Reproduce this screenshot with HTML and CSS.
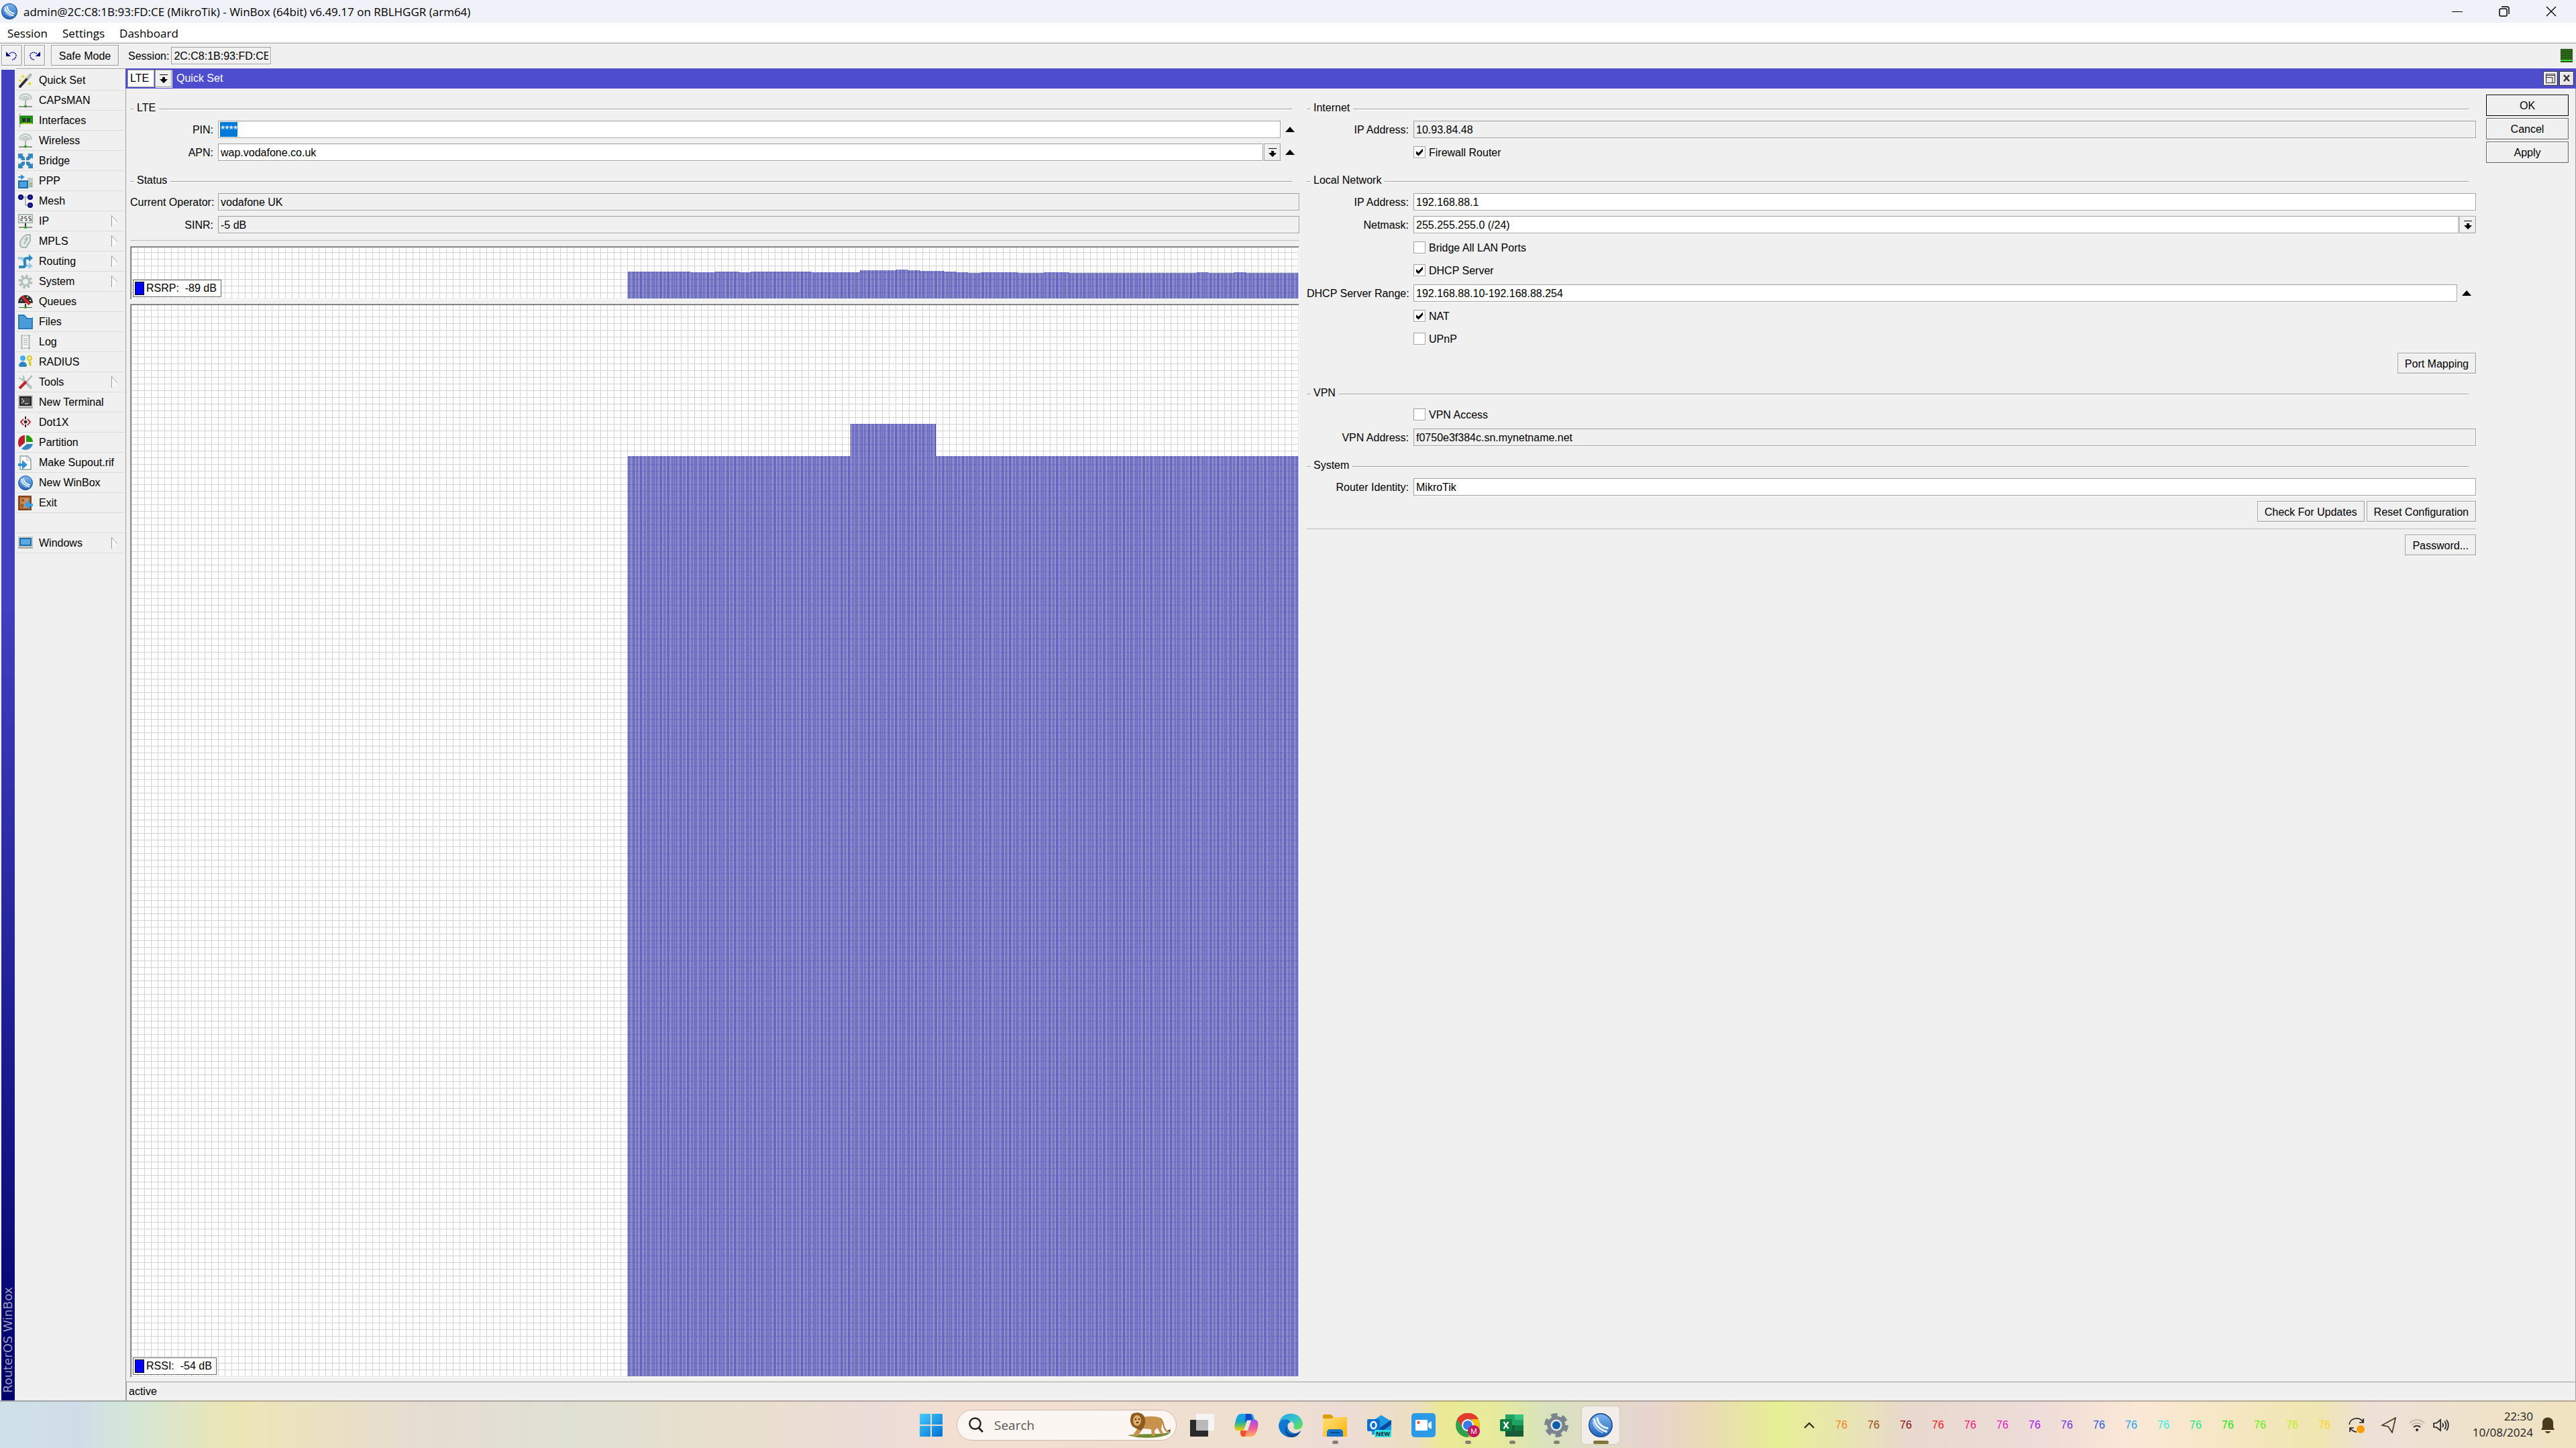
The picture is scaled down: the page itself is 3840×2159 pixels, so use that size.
FILE: index.html
```html
<!DOCTYPE html>
<html lang="en">
<head>
<meta charset="utf-8">
<title>admin@2C:C8:1B:93:FD:CE (MikroTik) - WinBox</title>
<link rel="stylesheet" href="styles.css">
</head>
<body>
<svg class="defs" aria-hidden="true">
  <defs>
    <linearGradient id="ball" x1="0" y1="0" x2="0" y2="1"><stop offset="0" stop-color="#7db8f5"/><stop offset="1" stop-color="#2263b5"/></linearGradient>
    <linearGradient id="blue" x1="0" y1="0" x2="1" y2="1"><stop offset="0" stop-color="#44ccff"/><stop offset="1" stop-color="#0070d0"/></linearGradient>
    <linearGradient id="edgeTop" x1="0" y1="0" x2="1" y2="1"><stop offset="0" stop-color="#22a6e8"/><stop offset=".5" stop-color="#35c4cc"/><stop offset="1" stop-color="#6fe63c"/></linearGradient>
    <linearGradient id="folder" x1="0" y1="0" x2="1" y2="1"><stop offset="0" stop-color="#ffe07a"/><stop offset="1" stop-color="#fbb40c"/></linearGradient>
    <linearGradient id="copA" x1="0" y1="0" x2="0" y2="1"><stop offset="0" stop-color="#18a0ee"/><stop offset=".45" stop-color="#1aa6c8"/><stop offset=".7" stop-color="#67bf5a"/><stop offset="1" stop-color="#ffcb0a"/></linearGradient>
    <linearGradient id="copB" x1="0" y1="0" x2="0" y2="1"><stop offset="0" stop-color="#a04cf0"/><stop offset=".5" stop-color="#ee5a9a"/><stop offset="1" stop-color="#ffb35c"/></linearGradient>
    <symbol id="i-ball" viewBox="0 0 22 22"><circle cx="11" cy="11" r="10.5" fill="url(#ball)" stroke="#1c4f93"/><path d="M5 5c1 6 5 10 12 12M8 4c0 5 4 9 10 10" fill="none" stroke="#e6f2ff" stroke-width="2"/><path d="M4 8c1 5 4 8 9 10" fill="none" stroke="#bcdcff"/></symbol>
    <symbol id="i-antenna" viewBox="0 0 22 22"><path d="M2 9a9 8 0 0 1 18 0M5 10a6 5 0 0 1 12 0M8 11a3 3 0 0 1 6 0" fill="none" stroke="#b4c1bf" stroke-width="2"/><path d="M11 10v9" stroke="#a6b3b0" stroke-width="2"/><path d="M1 20h20" stroke="#333"/><circle cx="11" cy="19.500" r="2" fill="#22a810"/></symbol>
    <symbol id="i-down" viewBox="0 0 12 13"><path d="M0 0h12v1H0zM4 4h4v3h4l-6 6-6-6h4z"/></symbol>
    <symbol id="i-up" viewBox="0 0 14 8"><path d="M7 0l7 8H0z"/></symbol>
    <symbol id="i-sub" viewBox="0 0 10 18"><path d="M1 1l8 9-8 7z" fill="#fbfbfb"/><path d="M0 0h1v17H0z" fill="#999"/><path d="M1 1l8 9" stroke="#aaa" fill="none"/></symbol>
  </defs>
</svg>

<header class="titlebar">
  <svg class="logo"><use href="#i-ball"/></svg>
  <h1 class="title">admin@2C:C8:1B:93:FD:CE (MikroTik) - WinBox (64bit) v6.49.17 on RBLHGGR (arm64)</h1>
  <div class="wincontrols">
    <button aria-label="Minimize"><svg viewBox="0 0 16 16"><path d="M0 8.500h16" stroke="#000"/></svg></button>
    <button aria-label="Restore"><svg viewBox="0 0 16 16" fill="none" stroke="#000" stroke-width="1.500"><rect x="1" y="4" width="11" height="11" rx="2"/><path d="M4 1h8a3 3 0 0 1 3 3v8"/></svg></button>
    <button aria-label="Close"><svg viewBox="0 0 16 16"><path d="M1 1l14 14M15 1L1 15" stroke="#000" stroke-width="1.400"/></svg></button>
  </div>
</header>

<nav class="menubar"><a href="#session">Session</a><a href="#settings">Settings</a><a href="#dashboard">Dashboard</a></nav>

<div class="toolbar">
  <button class="btn tool" aria-label="Undo"><svg viewBox="0 0 17 14"><path d="M5 4c5-4 11-1 10 4-1 3-3 5-6 5" fill="none" stroke="#00008c" stroke-width="1.500" stroke-dasharray="2 1"/><path d="M0 1v7h7z" fill="#00008c"/></svg></button>
  <button class="btn tool" aria-label="Redo"><svg viewBox="0 0 17 14"><path d="M12 4C7 0 1 3 2 8c1 3 3 5 6 5" fill="none" stroke="#00008c" stroke-width="1.500" stroke-dasharray="2 1"/><path d="M17 1v7h-7z" fill="#00008c"/></svg></button>
  <button class="btn safe">Safe Mode</button>
  <label class="sess" for="sess">Session:</label>
  <input class="field ro sessfield" id="sess" value="2C:C8:1B:93:FD:CE" readonly>
  <span class="led" role="img" aria-label="CPU load"></span>
</div>

<div class="workspace">
  <div class="brand"><span>RouterOS WinBox</span></div>
  <nav class="sidebar">
    <a href="#"><svg viewBox="0 0 22 22"><path d="M3 20L18 3" stroke="#333" stroke-width="4" stroke-linecap="round"/><path d="M13 8l6-6" stroke="#b9c1c0" stroke-width="4"/><path d="M7 1l1 3 3 1-3 1-1 3-1-3-3-1 3-1zM17 12l1 3 3 1-3 1-1 2-1-2-2-1 2-1zM3 8l1 2 2 1-2 1-1 2-1-2-2-1 2-1z" fill="#e6dc1c"/></svg>Quick Set</a>
    <a href="#"><svg><use href="#i-antenna"/></svg>CAPsMAN</a>
    <a href="#"><svg viewBox="0 0 22 22"><path d="M1 0h3v21H1z" fill="#c3cdca"/><path d="M3 4h19v11H3z" fill="#1b9a0a" stroke="#0e6a04"/><path d="M6 7h5v6H6zM13 7h5v6h-5z" fill="#333"/><path d="M6 15h14" stroke="#e0d022" stroke-width="2" stroke-dasharray="2 1"/></svg>Interfaces</a>
    <a href="#"><svg><use href="#i-antenna"/></svg>Wireless</a>
    <a href="#"><svg viewBox="0 0 22 22"><path d="M0 0h8L6 2l4 4v4H6L2 6 0 8zM22 0h-8l2 2-4 4v4h4l4-4 2 2zM0 22h8l-2-2 4-4v-4H6l-4 4-2-2zM22 22h-8l2-2-4-4v-4h4l4 4 2-2z" fill="#3387bd"/></svg>Bridge</a>
    <a href="#"><svg viewBox="0 0 22 22"><path d="M14 6h8v15h-8z" fill="#c4cac8"/><path d="M17 15h4M17 18h4" stroke="#3aa52a"/><path d="M1 11h13v10H1z" fill="#4aa3df" stroke="#1d6ea5" stroke-width="2"/><path d="M0 4h4V1l6 4-6 4V6H0z" fill="#2d8fd0"/></svg>PPP</a>
    <a href="#"><svg viewBox="0 0 22 22"><path d="M5 5h12M11 5v12h6" stroke="#b0bbb9" stroke-width="2" fill="none"/><g fill="#2632a5" stroke="#00006c" stroke-width="2"><circle cx="4" cy="5" r="3"/><circle cx="18" cy="5" r="3"/><circle cx="18" cy="17" r="3"/></g></svg>Mesh</a>
    <a href="#"><svg viewBox="0 0 22 22"><path d="M1 1h20v12H1z" fill="#fff" stroke="#a9b7b4" stroke-width="2"/><path d="M4 4h3v3H4v3h3M13 4h-3v3h3v3h-3M19 4h-3v3h3v3h-3" fill="none" stroke="#222"/><path d="M11 14v6" stroke="#333" stroke-width="2"/><path d="M1 20h20" stroke="#333"/><circle cx="11" cy="20" r="2" fill="#22a810"/></svg>IP<svg class="sub"><use href="#i-sub"/></svg></a>
    <a href="#"><svg viewBox="0 0 22 22"><path d="M8 4l5-3h5v9l-6 10H6l-3-3V11z" fill="#e3e9e7" stroke="#a9b7b4" stroke-width="2"/><path d="M9 15l5-9M10 8l4-3" stroke="#a9b7b4" stroke-width="2"/></svg>MPLS<svg class="sub"><use href="#i-sub"/></svg></a>
    <a href="#"><svg viewBox="0 0 22 22"><path d="M0 4h7l7 12h2v-4l6 6-6 4v-3h-4L5 8H0z" fill="#9fc8e4"/><path d="M1 21v-4h7V8c0-3 2-4 8-4V0l6 6-6 5V8h-4v9c0 3-2 4-4 4z" fill="#2f88c2"/></svg>Routing<svg class="sub"><use href="#i-sub"/></svg></a>
    <a href="#"><svg viewBox="0 0 22 22"><circle cx="11" cy="11" r="8.500" fill="none" stroke="#b1bfbc" stroke-width="4" stroke-dasharray="3.600 3.070"/><circle cx="11" cy="11" r="5.500" fill="#eef1f0" stroke="#b1bfbc" stroke-width="3"/></svg>System<svg class="sub"><use href="#i-sub"/></svg></a>
    <a href="#"><svg viewBox="0 0 22 22"><path d="M0 13C0-3 22-3 22 13z" fill="#333"/><path d="M6 3l11 12" stroke="#d42828" stroke-width="4"/><path d="M4 9h1M17 9h2M13 4h2" stroke="#ddd" stroke-width="2"/><path d="M11 14v5" stroke="#333" stroke-width="2"/><path d="M1 19.500h20" stroke="#555"/><circle cx="11" cy="19" r="2" fill="#22a810"/></svg>Queues</a>
    <a href="#"><svg viewBox="0 0 22 22"><path d="M0 0h9l4 4h9v18H0z" fill="#2a7cba"/><path d="M2 2h6l5 5h7v13H2z" fill="#4d9cd9"/><path d="M13 4h8v1h-7z" fill="#fff"/></svg>Files</a>
    <a href="#"><svg viewBox="0 0 22 22"><path d="M5 1h13v20H5z" fill="#fafafa"/><path d="M5.500 0v22M16.500 0v22" stroke="#a9b7b4" stroke-width="2"/><path d="M5 1.500h13M5 20h13" stroke="#a9b7b4" stroke-width="2" stroke-dasharray="2 1"/><path d="M8 6h6M8 9h6M8 12h6M8 15h6" stroke="#94a3a0"/></svg>Log</a>
    <a href="#"><svg viewBox="0 0 22 22"><circle cx="7" cy="5" r="4" fill="#42b0ee"/><path d="M1 17c0-9 12-9 12 0l-2 1H3z" fill="#2b85c0"/><circle cx="17" cy="5" r="3" fill="none" stroke="#d8cb12" stroke-width="2"/><path d="M17 8v8M18 12h2M18 15h2" stroke="#d8cb12" stroke-width="2"/></svg>RADIUS</a>
    <a href="#"><svg viewBox="0 0 22 22"><path d="M7 7l13 13" stroke="#b3c0bd" stroke-width="4"/><path d="M1 4c2 3 6 3 8 1L7 1" stroke="#b3c0bd" stroke-width="2" fill="none"/><path d="M12 11L21 1" stroke="#a9b7b4" stroke-width="2"/><path d="M2 20l10-10" stroke="#c3202f" stroke-width="4"/></svg>Tools<svg class="sub"><use href="#i-sub"/></svg></a>
    <a href="#"><svg viewBox="0 0 22 22"><path d="M0 0h22v20H0z" fill="#c6c6c6"/><path d="M0 18h22v2H0z" fill="#aaa"/><path d="M2 2h18v14H2z" fill="#222"/><path d="M4 4h14v10H4z" fill="#4a4a4a"/><path d="M5 5l4 4-4 3M10 13h5" stroke="#fff" fill="none"/></svg>New Terminal</a>
    <a href="#"><svg viewBox="0 0 22 22"><path d="M8 6L4 10l4 5M14 6l4 4-4 5" fill="none" stroke="#c4273a" stroke-width="2"/><path d="M11 2v4M11 14v4" stroke="#222" stroke-width="2"/><circle cx="11" cy="10" r="2.500" fill="#333"/></svg>Dot1X</a>
    <a href="#"><svg viewBox="0 0 22 22"><path d="M10 0v11L2 18C-3 9 2 0 10 0z" fill="#bb1f2c"/><path d="M12 0c6 0 10 5 10 10H12z" fill="#1e9a0c"/><path d="M5 20l8-7h9c-2 8-11 11-17 7z" fill="#3484c4"/></svg>Partition</a>
    <a href="#"><svg viewBox="0 0 22 22"><path d="M3 1h11l5 5v15H3z" fill="#fafafa" stroke="#a9b7b4" stroke-width="2"/><path d="M13 1v6h6" fill="none" stroke="#a9b7b4"/><path d="M0 12h6V7l8 7-8 7v-5H0z" fill="#2b93d8"/></svg>Make Supout.rif</a>
    <a href="#"><svg><use href="#i-ball"/></svg>New WinBox</a>
    <a href="#"><svg viewBox="0 0 22 22"><path d="M0 0h20v22H0z" fill="#8a481c"/><path d="M3 3h14v16H3z" fill="#c98d5e"/><path d="M5 5h4v4H5zM4 12h4v6H4z" fill="#9a5a2b"/><path d="M22 12h-5V6l-8 8 8 7v-5h5z" fill="#36a4ea"/></svg>Exit</a>
    <span class="blank"></span>
    <a href="#"><svg viewBox="0 0 22 22"><path d="M0 1h22v18H0z" fill="#c6c6c6"/><path d="M0 17h22v2H0z" fill="#aaa"/><path d="M3 4h16v10H3z" fill="#5aa9e2" stroke="#1c70aa" stroke-width="2"/></svg>Windows<svg class="sub"><use href="#i-sub"/></svg></a>
  </nav>

  <main class="window">
    <div class="wintitle">
      <select class="mode" aria-label="Mode"><option>LTE</option></select>
      <button class="btn drop" aria-label="Open mode list"><svg><use href="#i-down"/></svg></button>
      <h2>Quick Set</h2>
      <button class="wbtn" aria-label="Restore window"><svg viewBox="0 0 14 14" fill="none" stroke="#333"><path d="M.5.500h13v13H.5zM1 2.500h13M1 5.500h9v8" /></svg></button>
      <button class="wbtn" aria-label="Close window"><svg viewBox="0 0 14 14"><path d="M3 2l8 9M11 2L3 11" stroke="#333" stroke-width="2.500"/></svg></button>
    </div>

    <form class="panel">
      <section class="col left">
        <h3 class="legend">LTE</h3>
        <div class="row"><label for="pin">PIN:</label><input class="field pin" id="pin" value="****"><button type="button" class="fold" aria-label="Remove PIN"><svg><use href="#i-up"/></svg></button></div>
        <div class="row"><label for="apn">APN:</label><input class="field" id="apn" value="wap.vodafone.co.uk"><button type="button" class="btn drop" aria-label="APN list"><svg><use href="#i-down"/></svg></button><button type="button" class="fold" aria-label="Remove APN"><svg><use href="#i-up"/></svg></button></div>
        <h3 class="legend">Status</h3>
        <div class="row"><label for="op">Current Operator:</label><input class="field ro" id="op" value="vodafone UK" readonly></div>
        <div class="row"><label for="sinr">SINR:</label><input class="field ro" id="sinr" value="-5 dB" readonly></div>
        <hr>
        <div class="charts">
          <div class="chart rsrp">
            <i style="width:94px;height:40px"></i><i style="width:36px;height:39px"></i><i style="width:36px;height:40px"></i><i style="width:18px;height:39px"></i><i style="width:90px;height:40px"></i><i style="width:72px;height:39px"></i><i style="width:54px;height:42px"></i><i style="width:18px;height:43px"></i><i style="width:18px;height:42px"></i><i style="width:36px;height:41px"></i><i style="width:18px;height:40px"></i><i style="width:18px;height:39px"></i><i style="width:18px;height:38px"></i><i style="width:56px;height:39px"></i><i style="width:38px;height:38px"></i><i style="width:38px;height:39px"></i><i style="width:190px;height:38px"></i><i style="width:18px;height:39px"></i><i style="width:38px;height:38px"></i><i style="width:18px;height:39px"></i><i style="width:77px;height:38px"></i>
            <p class="key"><b></b>RSRP:&nbsp; -89 dB</p>
          </div>
          <div class="chart rssi">
            <i style="width:332px;height:1372px"></i><i style="width:128px;height:1420px"></i><i style="width:539px;height:1372px"></i>
            <p class="key"><b></b>RSSI:&nbsp; -54 dB</p>
          </div>
        </div>
      </section>

      <section class="col right">
        <h3 class="legend">Internet</h3>
        <div class="row"><label for="wan">IP Address:</label><input class="field ro" id="wan" value="10.93.84.48" readonly></div>
        <div class="row check"><input type="checkbox" id="fw" checked><label for="fw">Firewall Router</label></div>
        <h3 class="legend">Local Network</h3>
        <div class="row"><label for="lan">IP Address:</label><input class="field" id="lan" value="192.168.88.1"></div>
        <div class="row"><label for="mask">Netmask:</label><select class="field" id="mask"><option>255.255.255.0 (/24)</option></select><button type="button" class="btn drop" aria-label="Netmask list"><svg><use href="#i-down"/></svg></button></div>
        <div class="row check"><input type="checkbox" id="br"><label for="br">Bridge All LAN Ports</label></div>
        <div class="row check"><input type="checkbox" id="dhcp" checked><label for="dhcp">DHCP Server</label></div>
        <div class="row"><label for="range">DHCP Server Range:</label><input class="field" id="range" value="192.168.88.10-192.168.88.254"><button type="button" class="fold" aria-label="Remove range"><svg><use href="#i-up"/></svg></button></div>
        <div class="row check"><input type="checkbox" id="nat" checked><label for="nat">NAT</label></div>
        <div class="row check"><input type="checkbox" id="upnp"><label for="upnp">UPnP</label></div>
        <div class="actions"><button type="button" class="btn">Port Mapping</button></div>
        <h3 class="legend">VPN</h3>
        <div class="row check"><input type="checkbox" id="vpn"><label for="vpn">VPN Access</label></div>
        <div class="row"><label for="vpna">VPN Address:</label><input class="field ro" id="vpna" value="f0750e3f384c.sn.mynetname.net" readonly></div>
        <h3 class="legend">System</h3>
        <div class="row"><label for="ident">Router Identity:</label><input class="field" id="ident" value="MikroTik"></div>
        <div class="actions"><button type="button" class="btn">Check For Updates</button><button type="button" class="btn">Reset Configuration</button></div>
        <hr>
        <div class="actions"><button type="button" class="btn">Password...</button></div>
      </section>

      <div class="side">
        <button type="button" class="btn primary">OK</button>
        <button type="button" class="btn">Cancel</button>
        <button type="button" class="btn">Apply</button>
      </div>
    </form>
    <footer class="status">active</footer>
  </main>
</div>

<div class="taskbar">
  <div class="apps">
    <button class="app" aria-label="Start"><svg viewBox="0 0 36 36"><path d="M2 1h15v16H1V2zM19 1h15l1 1v15H19zM1 19h16v16H2l-1-1zM19 19h16v15l-1 1H19z" fill="url(#blue)"/></svg></button>
    <div class="search">
      <svg class="mag" viewBox="0 0 24 24"><circle cx="11" cy="10" r="8.500" fill="none" stroke="#222" stroke-width="2.500"/><path d="M17 17l6 6" stroke="#222" stroke-width="3"/></svg>
      <input type="search" placeholder="Search" aria-label="Search">
      <svg class="lion" viewBox="0 0 64 38"><path d="M0 34c12-3 50 0 64-5-5 8-30 10-50 8z" fill="#6f8a2f"/><path d="M20 8c8-3 22-3 28 0 6 5 3 10 2 17l4 8h-4l-6-10-4 4 1 8h-5l-1-10-12-1-8 11H7l9-13z" fill="#c9924c"/><path d="M48 9c7 2 3 16 12 20" fill="none" stroke="#b9803d" stroke-width="2"/><path d="M59 27l5-2-1 5z" fill="#6d4319"/><path d="M6 3c4-4 16-4 19 4 3 8 0 16-6 20L9 22C3 18 3 8 6 3z" fill="#8d5a20"/><ellipse cx="14" cy="12" rx="6" ry="8" fill="#dcae67"/><path d="M11 10h2M16 10h2M13 15h3" stroke="#3b2208" stroke-width="2"/></svg>
    </div>
    <button class="app" aria-label="Task view"><svg viewBox="0 0 36 36"><rect y="10" width="27" height="25" rx="1" fill="#2a2a2a"/><rect x="9" y="1" width="27" height="25" rx="1" fill="#f5f5f5"/><path d="M9 10h18v16H9z" fill="#b9b9b9"/></svg></button>
    <button class="app" aria-label="Copilot"><svg viewBox="0 0 36 36"><path d="M19 1h6c4 0 4 8 6 9h-7l-4 4-6 12H4c-5-1-4-8-2-15S6 1 11 1z" fill="url(#copA)"/><path d="M17 1h5c4 0 4 5 5 9h-6c-3 0-4 2-5 5z" fill="#1746c8"/><path d="M18 35h-6c-3-1-3-6-3-9h6c4 0 5-3 6-8l3-8h7c6 1 5 9 3 15s-4 10-9 10z" fill="url(#copB)"/><path d="M9 26h6c2 0 3-1 4-3l-3 12h-4c-3-1-3-6-3-9z" fill="#f4502c"/><path d="M19 11h6l-5 15h-6z" fill="#f0e2d4"/></svg></button>
    <button class="app" aria-label="Edge"><svg viewBox="0 0 36 36"><path d="M1 14C4-4 34-4 36 16c0 7-6 9-11 8-4-1-2-3-2-6-1-8-14-11-22-4z" fill="url(#edgeTop)"/><path d="M0 18C1 9 14 6 19 14c-6-2-9 10 1 15 5 2 9 1 13-3-5 11-16 12-23 8C4 31 0 25 0 18z" fill="#0f78d0"/><path d="M12 19c-3 13 12 17 21 7-4 11-14 11-18 9-6-3-7-11-3-16z" fill="#124a93"/></svg></button>
    <button class="app running" aria-label="File Explorer"><svg viewBox="0 0 36 36"><path d="M0 3l2-1h10l4 4h18v8H0z" fill="#dd9c0b"/><path d="M0 8h13l3-2h20v29H0z" fill="url(#folder)"/><path d="M6 35V27l3-3h18l3 3v8z" fill="#1773c4"/><path d="M11 29h14" stroke="#0c4b87" stroke-width="2"/></svg></button>
    <button class="app" aria-label="Outlook"><svg viewBox="0 0 36 36"><path d="M7 12L21 3l15 9v20H7z" fill="#1a9be2"/><path d="M16 24L36 10v7L22 27z" fill="#0a47a0"/><rect y="9" width="19" height="18" rx="2" fill="#0f6fcf"/><ellipse cx="9.500" cy="18" rx="4" ry="5" fill="none" stroke="#fff" stroke-width="2.500"/><rect x="11" y="25" width="25" height="11" rx="2" fill="#2de3dc"/><text x="13" y="34" font-size="9" font-weight="700" font-family="Open Sans, sans-serif" fill="#123">NEW</text></svg></button>
    <button class="app" aria-label="Video call"><svg viewBox="0 0 36 36"><rect width="36" height="36" rx="5" fill="#2d9ae8"/><rect x="6" y="10" width="18" height="16" rx="1" fill="#fff"/><path d="M25 15l5-3v12l-5-3z" fill="#e9f4fd"/><circle cx="10.500" cy="14" r="2.200" fill="#f5523c"/></svg></button>
    <button class="app running" aria-label="Chrome"><svg viewBox="0 0 36 36"><circle cx="18" cy="18" r="18" fill="#30a04e"/><path d="M2 9C10-4 28-3 34 9H18l-8 12z" fill="#e33b2e"/><path d="M34 9c6 13-4 27-16 27l8-13c2-5 0-10-3-14z" fill="#fbc116"/><circle cx="18" cy="18" r="9" fill="#fff"/><circle cx="18" cy="18" r="7" fill="#3b78e7"/><circle cx="27" cy="27" r="9" fill="#c2185b"/><text x="22" y="31" font-size="11" font-family="Open Sans, sans-serif" fill="#fff">M</text></svg></button>
    <button class="app running" aria-label="Excel"><svg viewBox="0 0 36 36"><path d="M8 2h27v33H8z" fill="#21a366"/><path d="M22 2h13v8H22z" fill="#33c481"/><path d="M8 18h14v17H8z" fill="#185c37"/><path d="M22 18h13v8H22z" fill="#107c41"/><path d="M8 26h27v9H8z" fill="#185c37"/><rect y="9" width="18" height="18" rx="2" fill="#107c41"/><path d="M5.500 13l7 10M12.500 13l-7 10" stroke="#fff" stroke-width="2.200"/></svg></button>
    <button class="app running" aria-label="Settings"><svg viewBox="0 0 36 36"><circle cx="18" cy="18" r="15" fill="none" stroke="#7b838c" stroke-width="6" stroke-dasharray="9 6.700"/><circle cx="18" cy="18" r="11" fill="#e4e8ec" stroke="#7b838c" stroke-width="5"/><circle cx="18" cy="18" r="6" fill="#0f5fa8"/></svg></button>
    <button class="app running current" aria-label="WinBox"><svg><use href="#i-ball"/></svg></button>
  </div>
  <div class="tray">
    <button class="cell" aria-label="Hidden icons"><svg class="chev" viewBox="0 0 16 10"><path d="M1 9l7-7 7 7" fill="none" stroke="#222" stroke-width="2"/></svg></button>
    <span class="cell temp" style="color:#ff7a1a">76</span><span class="cell temp" style="color:#964a10">76</span><span class="cell temp" style="color:#8a0d0d">76</span><span class="cell temp" style="color:#f01a1a">76</span><span class="cell temp" style="color:#f01478">76</span><span class="cell temp" style="color:#e01ac8">76</span><span class="cell temp" style="color:#a614f0">76</span><span class="cell temp" style="color:#6a32e0">76</span><span class="cell temp" style="color:#1a5ae8">76</span><span class="cell temp" style="color:#1aa0f5">76</span><span class="cell temp" style="color:#28eef0">76</span><span class="cell temp" style="color:#14e888">76</span><span class="cell temp" style="color:#14e614">76</span><span class="cell temp" style="color:#5af014">76</span><span class="cell temp" style="color:#bef014">76</span><span class="cell temp" style="color:#ffd21a">76</span>
    <span class="cell"><svg class="g24" viewBox="0 0 24 24"><path d="M1 11C2 1 17-2 22 8M22 2v6h-6M2 22v-6h6M2 16c3 4 6 6 10 6" fill="none" stroke="#222" stroke-width="1.700"/><circle cx="18" cy="18" r="6" fill="#ff9d0a"/></svg></span>
    <span class="cell"><svg class="g24" viewBox="0 0 24 24"><path d="M22 1L2 12l9 2 6 9z" fill="none" stroke="#4a3a1c" stroke-width="1.700"/></svg></span>
    <span class="cell small"><svg class="g24" viewBox="0 0 24 24" fill="none" stroke-width="1.800"><path d="M1 9a15 15 0 0 1 22 0M4 12a11 11 0 0 1 16 0" stroke="#c5b8ab"/><path d="M7 15a7 7 0 0 1 10 0" stroke="#222"/><circle cx="12" cy="19" r="2" fill="#222"/></svg></span>
    <span class="cell small"><svg class="g24" viewBox="0 0 24 24" fill="none" stroke="#222" stroke-width="1.700"><path d="M1 9v6h4l6 5V4L5 9zM14 9a5 5 0 0 1 0 6M17 6a9 9 0 0 1 0 12M20 4a13 13 0 0 1 0 16"/></svg></span>
    <p class="clock">22:30<br>10/08/2024</p>
    <svg class="bell" viewBox="0 0 20 24"><path d="M0 19l2-4V8c0-10 16-10 16 0v7l2 4zM6 21h8c-1 4-7 4-8 0z" fill="#4a3a1c"/></svg>
  </div>
</div>
</body>
</html>
```
FILE: styles.css
```css
* { box-sizing: border-box; }

body {
  margin: 0;
  min-height: 100vh;
  display: flex;
  flex-direction: column;
  background: #f0f0f0;
  color: #000;
  font: 16px/22px "Liberation Sans", Arial, sans-serif;
}

.defs { position: absolute; width: 0; height: 0; }
button, input, select { font: inherit; color: inherit; margin: 0; border-radius: 0; }
button { padding: 0; border: 0; background: none; }
svg { display: block; flex: none; }
h1, h2, h3, p { margin: 0; font: inherit; }
a { color: inherit; text-decoration: none; }

/* title bar and menu */
.titlebar {
  display: flex;
  align-items: center;
  height: 34px;
  padding: 0 2px;
  background: #f0f2f9;
  font: 17px/24px "Open Sans", "Noto Sans", sans-serif;
}
.title { padding-top: 2px; }
.logo { width: 24px; height: 24px; margin-right: 9px; }
.wincontrols { display: flex; margin-left: auto; }
.wincontrols button { width: 70px; height: 34px; display: grid; place-items: center; }
.wincontrols svg { width: 16px; height: 16px; }
.menubar {
  display: flex;
  gap: 22px;
  height: 28px;
  padding-left: 11px;
  background: #fff;
  font: 17px/31px "Open Sans", "Noto Sans", sans-serif;
}

/* shared controls */
.btn {
  display: flex;
  align-items: center;
  justify-content: center;
  height: 31px;
  padding: 2px 10px 0;
  border: 1px solid #a0a0a0;
  background: #f0f0f0;
  box-shadow: 1px 1px 0 #fff, inset 1px 1px 0 #fff, inset -1px -1px 0 #e3e3e3;
  white-space: nowrap;
}
.btn.drop { width: 25px; height: 26px; padding: 0; margin-left: 1px; }
.btn.drop svg { width: 12px; height: 13px; }
.field {
  appearance: none;
  flex: 1;
  min-width: 0;
  height: 26px;
  padding: 2px 3px 0;
  border: 1px solid #a0a0a0;
  outline: 0;
  background: #fff;
  box-shadow: 1px 1px 0 #fff;
}
.field.ro { background: #f0f0f0; }
.field.pin {
  color: #fff;
  background: linear-gradient(#0078d7, #0078d7) 2px 1px / 26px 22px no-repeat #fff;
}

.toolbar {
  display: flex;
  align-items: center;
  height: 38px;
  margin-top: 2px;
  padding: 2px 5px 4px 2px;
  border-top: 1px solid #a0a0a0;
  box-shadow: inset 0 1px 0 #fff;
}
.btn.tool { width: 31px; padding: 0; margin-right: 3px; }
.tool svg { width: 17px; height: 14px; }
.btn.safe { width: 101px; margin-left: 6px; }
.sess { padding-top: 2px; margin: 0 3px 0 14px; }
.sessfield { flex: 0 0 149px; }
.led {
  width: 18px;
  height: 20px;
  margin-left: auto;
  background: linear-gradient(#3ee03e, #3ee03e) 0 16px / 18px 2px no-repeat,
    repeating-linear-gradient(#1f4f12 0 1px, #2f6a1a 1px 3px);
  box-shadow: -1px -1px 0 #ddd;
}

/* workspace */
.workspace { flex: 1; display: flex; min-height: 0; }
.brand {
  flex: none;
  width: 20px;
  margin: 2px 2px 0 2px;
  background: linear-gradient(#00006c, #4040c0 60%, #4040c0);
  color: #9a9ac8;
  writing-mode: vertical-rl;
  transform: rotate(180deg);
  padding-top: 11px;
  font: 18px/20px "DejaVu Sans", sans-serif;
  text-shadow: -1px -2px 2px #000040;
}
.sidebar {
  flex: none;
  width: 163px;
  padding: 2px 1px 0 0;
  border-top: 1px solid #a0a0a0;
  box-shadow: inset 0 1px 0 #fff;
}
.sidebar a, .blank {
  display: flex;
  align-items: center;
  height: 30px;
  padding: 0 10px 0 3px;
  border-bottom: 1px solid #dcdcdc;
  white-space: nowrap;
}
.sidebar svg { width: 22px; height: 22px; margin-right: 9px; }
.sidebar .sub { width: 10px; height: 18px; margin: 0 0 0 auto; }

.window {
  flex: 1;
  min-width: 0;
  display: flex;
  flex-direction: column;
  border: solid #a0a0a0;
  border-width: 0 1px;
}
.wintitle {
  display: flex;
  align-items: center;
  height: 30px;
  margin: 0 -1px;
  padding: 0 3px;
  background: #4d4dcd;
  color: #fff;
}
.mode {
  appearance: none;
  width: 40px;
  height: 26px;
  padding: 0 3px;
  border: 1px solid #a0a0a0;
  background: #fff;
  color: #000;
}
.wintitle .btn { color: #000; }
.wintitle h2 { flex: 1; margin-left: 7px; }
.wbtn {
  display: grid;
  place-items: center;
  width: 22px;
  height: 22px;
  margin-left: 2px;
  border: 1px solid #333;
  background: #ebe8ec;
  box-shadow: inset 1px 1px 0 #fff, inset -1px -1px 0 #ccc;
}
.wbtn svg { width: 14px; height: 14px; }

.panel {
  flex: 1;
  display: grid;
  grid-template-columns: 1fr 1fr 127px;
  column-gap: 11px;
  padding: 8px 10px 6px 6px;
}
.col { display: flex; flex-direction: column; gap: 8px; min-width: 0; }
.legend {
  display: flex;
  align-items: center;
  gap: 5px;
  height: 32px;
  padding: 10px 11px 0 0;
}
.legend::before, .legend::after {
  content: "";
  width: 5px;
  height: 2px;
  margin-top: 3px;
  background: linear-gradient(#a0a0a0 50%, #fff 50%);
}
.legend::after { flex: 1; }
.row { display: flex; height: 26px; align-items: center; }
.row > label { padding-top: 2px; }
.row > label:first-child { flex: none; width: 131px; padding-right: 7px; text-align: right; white-space: nowrap; }
.right .row > label:first-child { width: 159px; }
.right .check { padding-left: 159px; }
.row input[type="checkbox"] {
  appearance: none;
  width: 18px;
  height: 18px;
  margin-right: 5px;
  border: 1px solid #a0a0a0;
  background: #fff;
  box-shadow: 1px 1px 0 #fff;
  display: grid;
  place-items: center;
}
.row input:checked::before {
  content: "";
  width: 10px;
  height: 11px;
  background: #000;
  clip-path: polygon(0 35%, 36% 60%, 100% 0, 100% 38%, 36% 100%, 0 72%);
}
.fold { width: 28px; height: 26px; display: grid; place-items: center; }
.fold svg { width: 14px; height: 8px; }
.actions { display: flex; justify-content: flex-end; gap: 3px; }
hr { width: 100%; height: 3px; margin: 0; border: 0; border-bottom: 1px solid #c0c0c0; }
.side { display: flex; flex-direction: column; gap: 3px; padding: 1px 0 0 4px; }
.side .btn { height: 32px; border-color: #696969; }
.side .btn.primary { border-color: #000; }

/* signal charts */
.charts { flex: 1; display: flex; flex-direction: column; gap: 6px; }
.chart {
  position: relative;
  display: flex;
  justify-content: flex-end;
  align-items: flex-end;
  border: 1px solid;
  border-color: #a0a0a0 #fff #fff #a0a0a0;
  padding: 1px;
  background:
    repeating-linear-gradient(90deg, transparent 0 9px, #d3d3d3 9px 10px) content-box,
    repeating-linear-gradient(transparent 0 7px, #d3d3d3 7px 8px, transparent 8px 10px) content-box,
    #fff;
  box-shadow: inset 1px 1px 0 #696969, inset -1px -1px 0 #e3e3e3;
}
.rsrp { height: 80px; }
.rssi { flex: 1; }
.chart i { flex: none; background: repeating-linear-gradient(90deg, #00f 0 1px, transparent 1px 2px); }
.key {
  position: absolute;
  left: 3px;
  bottom: 3px;
  display: flex;
  align-items: center;
  height: 26px;
  padding: 0 6px 0 2px;
  border: 1px solid #696969;
  background: #fff;
}
.key b { width: 14px; height: 20px; margin-right: 3px; border: 1px solid #000; background: #00f; }

.status {
  height: 28px;
  padding-left: 4px;
  border-top: 1px solid #a0a0a0;
  box-shadow: inset 1px 0 0 #a0a0a0;
  line-height: 27px;
}

/* taskbar */
.taskbar {
  display: grid;
  grid-template-columns: 1fr auto 1fr;
  height: 71px;
  border-top: 2px solid rgb(110 100 100 / 45%);
  background: linear-gradient(90deg, #cfe0e8 0, #d0dde8 3%, #d4e6d8 5%, #ebe6b5 9%, #ebe2c0 12%, #e6dcd2 16%,
    #dfe0d4 22%, #e8e0cc 28%, #ecdcd8 34%, #f2dfd2 37%, #eedfcf 49%, #eddcd6 52%, #ecdfc0 55%, #ebe995 56%,
    #e6eb9c 58%, #d8e2bd 60%, #e8d5d0 64%, #ead9b8 66%, #e6ef95 69%, #e8e4b5 72%, #e8d8cd 74%, #eddcd8 79%,
    #fbe8d6 83%, #efe6b0 90%, #eee0d8 92%, #f0e3bf) border-box;
  font: 17px/24px "Open Sans", "Noto Sans", sans-serif;
}
.apps {
  grid-column: 2;
  display: flex;
  align-items: center;
  gap: 10px;
  margin-right: 66px;
}
.app {
  position: relative;
  display: grid;
  place-items: center;
  width: 56px;
  height: 56px;
  border-radius: 5px;
}
.app svg { width: 36px; height: 36px; }
.running::after {
  content: "";
  position: absolute;
  left: 24px;
  bottom: 0;
  width: 9px;
  height: 5px;
  border-radius: 3px;
  background: #85806f;
}
.current { background: #f2ede8; box-shadow: 0 0 2px #b9aaa0; }
.current::after { left: 17px; width: 23px; background: #80763c; }
.search {
  display: flex;
  align-items: center;
  width: 328px;
  height: 46px;
  padding: 0 8px 0 16px;
  border: 1px solid #cdbcae;
  border-radius: 23px;
  background: #fbf6f2;
}
.mag { width: 23px; height: 23px; }
.search input {
  flex: 1;
  min-width: 0;
  padding: 0 0 0 16px;
  border: 0;
  background: none;
  font-size: 19px;
}
.search input::placeholder { color: #5b5754; opacity: 1; }
.lion { width: 64px; height: 38px; }
.tray { grid-column: 3; display: flex; align-items: center; justify-content: flex-end; padding-right: 32px; }
.cell { display: grid; place-items: center; width: 48px; height: 48px; }
.cell.small { width: 36px; }
.temp { font-family: "Liberation Sans", sans-serif; font-size: 16px; }
.chev { width: 16px; height: 10px; }
.g24 { width: 24px; height: 24px; }
.clock { width: 119px; padding-bottom: 2px; text-align: right; color: #222; }
.bell { width: 20px; height: 24px; margin-left: 12px; }
```
